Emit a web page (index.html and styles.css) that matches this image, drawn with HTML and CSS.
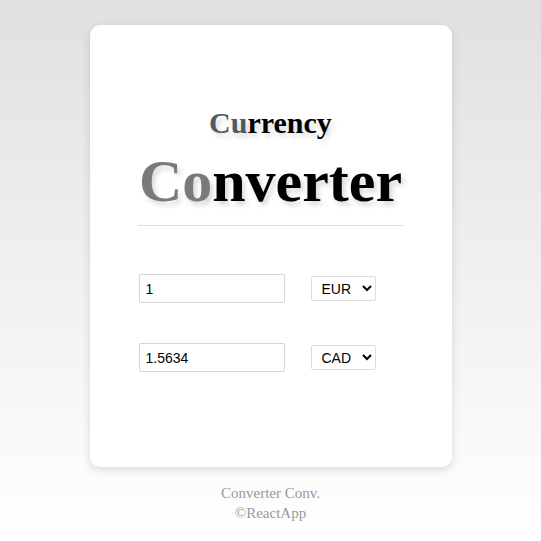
FILE: index.html
```html
<!DOCTYPE html>
<html>
<head>
<meta charset="utf-8">
<link rel="stylesheet" href="styles.css">
</head>
<body>
<main class="card">
  <h1 class="title">
    <span class="title-small"><span class="accent-dark">Cu</span>rrency</span>
    <span class="title-big"><span class="accent">Co</span>nverter</span>
  </h1>
  <hr class="divider">
  <div class="rows">
    <div class="row">
      <input class="amount" type="text" value="1">
      <select class="currency"><option>EUR</option></select>
    </div>
    <div class="row">
      <input class="amount" type="text" value="1.5634">
      <select class="currency"><option>CAD</option></select>
    </div>
  </div>
</main>
<footer class="footer">
  <div>Converter Conv.</div>
  <div>©ReactApp</div>
</footer>
</body>
</html>
```

FILE: styles.css
```css
html, body {
  margin: 0;
  padding: 0;
}
body {
  min-height: 541px;
  background: linear-gradient(to bottom, #e0e0e0 0%, #f3f3f3 60%, #ffffff 100%);
  padding-top: 25px;
  box-sizing: border-box;
  font-family: "Liberation Serif", serif;
}
.card {
  width: 362px;
  height: 442px;
  margin: 0 auto;
  box-sizing: border-box;
  background: #fff;
  border-radius: 10px;
  box-shadow: 0 3px 8px rgba(0, 0, 0, 0.13);
  padding: 82px 48px 0 48px;
}
.title {
  margin: 0;
  font-weight: bold;
  text-align: center;
  color: #000;
  text-shadow: 3px 4px 5px rgba(0, 0, 0, 0.15);
}
.title-small {
  display: block;
  font-size: 30px;
  line-height: 32px;
}
.title-big {
  display: block;
  font-size: 60px;
  line-height: 70px;
  margin-top: 7px;
}
.accent-dark {
  color: #4f5966;
}
.accent {
  color: #7a7a7a;
}
.divider {
  border: 0;
  border-top: 1px solid #e0e0e0;
  margin: 9px 0 0 0;
}
.rows {
  display: flex;
  flex-direction: column;
  gap: 40px;
  margin-top: 48px;
  padding-left: 1px;
}
.row {
  display: flex;
  align-items: center;
  gap: 26px;
}
.amount {
  width: 146px;
  height: 29px;
  box-sizing: border-box;
  border: 1px solid #d6d6d6;
  border-radius: 2px;
  padding: 0 6px;
  font-family: "Liberation Sans", Arial, sans-serif;
  font-size: 14px;
  color: #000;
  outline: none;
}
.currency {
  width: 65px;
  height: 25px;
  box-sizing: border-box;
  border: 1px solid #dcdcdc;
  border-radius: 2px;
  background: #fff;
  font-family: "Liberation Sans", Arial, sans-serif;
  font-size: 14px;
  color: #000;
  padding-left: 6px;
}
.footer {
  margin-top: 16px;
  text-align: center;
  color: #999;
  font-size: 15px;
  line-height: 20px;
}
```
